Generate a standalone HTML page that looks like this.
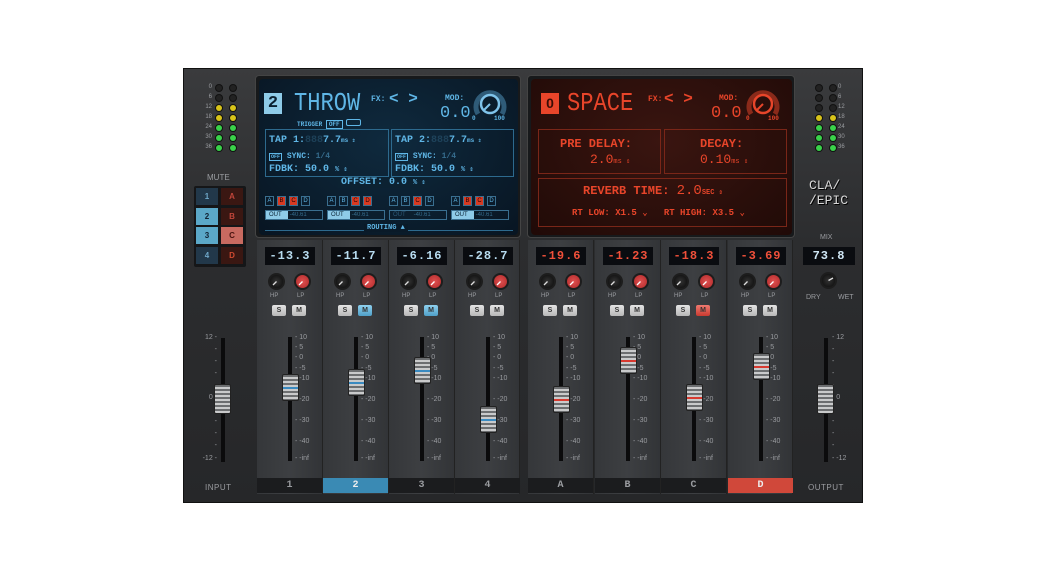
<!DOCTYPE html>
<html><head><meta charset="utf-8"><style>
*{margin:0;padding:0;box-sizing:border-box}
body{width:1042px;height:570px;background:#fff;position:relative;overflow:hidden;font-family:"Liberation Sans",sans-serif}
.a{position:absolute}
#plug{left:183px;top:68px;width:680px;height:435px;background:linear-gradient(#3a3b3d,#2c2d2f 40%,#262729);border:1px solid #111}
.lbl{color:#9a9ca0;font-size:7px}
.led{width:6px;height:6px;border-radius:50%}
.scr{border-radius:4px}
.bt{color:#5fb6e6;font-family:"Liberation Mono",monospace;font-weight:bold;white-space:nowrap}
.rt{color:#e8452a;font-family:"Liberation Mono",monospace;font-weight:bold;white-space:nowrap}
.ch{top:240px;height:254px;width:65px;background:linear-gradient(90deg,#35373a,#3d3f42 50%,#323437);border-right:1px solid #222}
.disp{background:#0a0c10;font-family:"Liberation Mono",monospace;font-weight:bold;font-size:12px;text-align:center;line-height:18px;letter-spacing:1px}
.knob{width:17px;height:17px;border-radius:50%;border:2px solid #1d1d1d}
.btn{width:14px;height:11px;background:linear-gradient(#e4e4e4,#b8b8b8);border-radius:2px;font-size:7px;font-weight:bold;color:#333;text-align:center;line-height:11px}
.track{width:4px;background:#0b0b0c}
.cap{width:17px;height:27px;background:repeating-linear-gradient(#6c6e70 0 2px,#c9cacb 2px 4px);border:1px solid #222;border-radius:2px}
.sc{font-size:7px;color:#9a9ca0}
.bar{height:15px;background:#1b1c1e;color:#9a9ca0;font-size:10px;text-align:center;line-height:15px;font-family:"Liberation Mono",monospace;font-weight:bold}
.bx{border:1px solid #2d6a8e}
.rbx{border:1px solid #7a2618}
</style></head><body>
<div id="plug" class="a"></div>
<div class="a scr" style="left:255px;top:75px;width:266px;height:163px;background:#17191b;border:1px solid #444"></div>
<div class="a scr" style="left:259px;top:79px;width:259px;height:156px;background:radial-gradient(ellipse at 50% 40%,#0f2a3e,#081522)"></div>
<div class="a" style="left:264px;top:93px;width:18px;height:21px;background:#8ecbe8;color:#0a2030;font-size:17px;font-weight:bold;text-align:center;line-height:21px;font-family:'Liberation Mono',monospace">2</div>
<div class="a bt" style="left:294px;top:88px;font-size:26px;font-weight:normal;transform:scaleX(.85);transform-origin:left">THROW</div>
<div class="a bt" style="left:371px;top:95px;font-size:8px">FX:</div>
<div class="a bt" style="left:389px;top:90px;font-size:16px">&lt; &gt;</div>
<div class="a bt" style="left:445px;top:94px;font-size:8px">MOD:</div>
<div class="a bt" style="left:440px;top:104px;font-size:17px;font-weight:normal">0.0</div>
<div class="a bt" style="left:472px;top:115px;font-size:6px">0</div><div class="a bt" style="left:494px;top:115px;font-size:6px">100</div>
<svg class="a" style="left:472px;top:87px" width="36" height="34"><path d="M6 27 A14 14 0 1 1 30 27" fill="none" stroke="#2f5b78" stroke-width="5"/><circle cx="18" cy="17" r="9" fill="none" stroke="#7fc3ea" stroke-width="2.5"/><line x1="18" y1="17" x2="12" y2="23" stroke="#7fc3ea" stroke-width="2"/></svg>
<div class="a bt" style="left:297px;top:119px;font-size:6px">TRIGGER <span style="border:1px solid #5fb6e6;padding:0 2px">OFF</span> <span style="display:inline-block;width:15px;height:7px;border:1px solid #5fb6e6;border-radius:2px"></span></div>
<div class="a bx" style="left:265px;top:129px;width:124px;height:48px"></div>
<div class="a bx" style="left:391px;top:129px;width:123px;height:48px"></div>
<div class="a bt" style="left:269px;top:135px;font-size:10px">TAP 1:<span style="opacity:.2">888</span>7.7<span style="font-size:6px">ms ⇕</span></div>
<div class="a bt" style="left:395px;top:135px;font-size:10px">TAP 2:<span style="opacity:.2">888</span>7.7<span style="font-size:6px">ms ⇕</span></div>
<div class="a bt" style="left:269px;top:152px;font-size:8px"><span style="border:1px solid #5fb6e6;font-size:5px;padding:0 1px">OFF</span> SYNC: <span style="opacity:.5">1/4</span></div>
<div class="a bt" style="left:395px;top:152px;font-size:8px"><span style="border:1px solid #5fb6e6;font-size:5px;padding:0 1px">OFF</span> SYNC: <span style="opacity:.5">1/4</span></div>
<div class="a bt" style="left:269px;top:164px;font-size:10px">FDBK: 50.0 <span style="font-size:7px">% ⇕</span></div>
<div class="a bt" style="left:395px;top:164px;font-size:10px">FDBK: 50.0 <span style="font-size:7px">% ⇕</span></div>
<div class="a bt" style="left:338px;top:177px;font-size:10px;background:#0c2232;padding:0 3px">OFFSET: 0.0 <span style="font-size:7px">% ⇕</span></div>
<div id="route"></div>
<div class="a" style="left:265px;top:230px;width:248px;height:1px;background:#2d6a8e"></div>
<div class="a bt" style="left:364px;top:224px;font-size:7px;background:#0a1a28;padding:0 3px">ROUTING ▲</div>
<div class="a scr" style="left:527px;top:75px;width:268px;height:163px;background:#17191b;border:1px solid #444"></div>
<div class="a scr" style="left:531px;top:79px;width:261px;height:156px;background:radial-gradient(ellipse at 50% 40%,#3a1510,#200a07)"></div>
<div class="a" style="left:541px;top:93px;width:18px;height:21px;background:#e8452a;color:#3a0c05;font-size:14px;font-weight:bold;text-align:center;line-height:21px">0</div>
<div class="a rt" style="left:567px;top:88px;font-size:26px;font-weight:normal;transform:scaleX(.85);transform-origin:left">SPACE</div>
<div class="a rt" style="left:648px;top:95px;font-size:8px">FX:</div>
<div class="a rt" style="left:664px;top:90px;font-size:16px">&lt; &gt;</div>
<div class="a rt" style="left:719px;top:94px;font-size:8px">MOD:</div>
<div class="a rt" style="left:711px;top:104px;font-size:17px;font-weight:normal">0.0</div>
<div class="a rt" style="left:746px;top:115px;font-size:6px">0</div><div class="a rt" style="left:768px;top:115px;font-size:6px">100</div>
<svg class="a" style="left:745px;top:87px" width="36" height="34"><path d="M6 27 A14 14 0 1 1 30 27" fill="none" stroke="#8a2a1a" stroke-width="5"/><circle cx="18" cy="17" r="9" fill="none" stroke="#e8452a" stroke-width="2.5"/><line x1="18" y1="17" x2="12" y2="23" stroke="#e8452a" stroke-width="2"/></svg>
<div class="a rbx" style="left:538px;top:129px;width:123px;height:45px"></div>
<div class="a rbx" style="left:664px;top:129px;width:123px;height:45px"></div>
<div class="a rbx" style="left:538px;top:178px;width:249px;height:49px"></div>
<div class="a rt" style="left:560px;top:137px;font-size:12px">PRE DELAY:</div>
<div class="a rt" style="left:590px;top:152px;font-size:13px;font-weight:normal">2.0<span style="font-size:7px">ms ⇕</span></div>
<div class="a rt" style="left:700px;top:137px;font-size:12px">DECAY:</div>
<div class="a rt" style="left:700px;top:152px;font-size:13px;font-weight:normal">0.10<span style="font-size:7px">ms ⇕</span></div>
<div class="a rt" style="left:583px;top:183px;font-size:12px">REVERB TIME: <span style="font-weight:normal;font-size:14px">2.0</span><span style="font-size:7px">SEC ⇕</span></div>
<div class="a rt" style="left:572px;top:208px;font-size:9px">RT LOW: X1.5 ⌄ &nbsp; RT HIGH: X3.5 ⌄</div>
<div class="a" style="left:809px;top:178px;color:#d8d8d8;font-family:'Liberation Mono',monospace;font-size:13px;line-height:15px;text-shadow:1px 1px 0 #000">CLA/<br>/EPIC</div>
<div id="gen"></div>
<script>
let h='';
const A=(s)=>h+=s;
const rows=['0','6','12','18','24','30','36'];
rows.forEach((r,i)=>{const y=84+i*10;const c=i<2?'#222':i<4?'#d8c41a':'#3ad24a';
A(`<div class="a lbl" style="left:200px;top:${y}px;width:12px;text-align:right;font-size:6px">${r}</div>`);
[216,230].forEach(x=>A(`<div class="a led" style="left:${x}px;top:${y+1}px;background:${c};box-shadow:0 0 0 1px #111"></div>`));
const c2=i<3?'#222':i<4?'#d8c41a':'#3ad24a';
A(`<div class="a lbl" style="left:838px;top:${y}px;font-size:6px">${r}</div>`);
[818,832].forEach(x=>A(`<div class="a led" style="left:${x-2}px;top:${y+1}px;background:${c2};box-shadow:0 0 0 1px #111"></div>`));
});
A(`<div class="a lbl" style="left:207px;top:173px;font-size:8px">MUTE</div>`);
A(`<div class="a" style="left:194px;top:186px;width:52px;height:81px;background:#151618;border-radius:2px"></div>`);
const mb=[['1','#22384a','#6fa7c8'],['A','#3a1712','#c0453a'],['2','#5ba8c8','#123'],['B','#3a1712','#c0453a'],['3','#5ba8c8','#123'],['C','#c86a60','#4a1410'],['4','#22384a','#6fa7c8'],['D','#3a1712','#d04a30']];
mb.forEach((m,i)=>{const x=196+(i%2)*25,y=188+Math.floor(i/2)*19.5;A(`<div class="a" style="left:${x}px;top:${y}px;width:22px;height:17px;background:${m[1]};color:${m[2]};font-size:8px;text-align:center;line-height:17px;font-weight:bold">${m[0]}</div>`)});
[[265,'B,C'],[327,'C,D'],[389,'C'],[451,'B,C']].forEach(([x,on],j)=>{
['A','B','C','D'].forEach((l,k)=>{const o=on.includes(l);A(`<div class="a" style="left:${x+k*12}px;top:196px;width:9px;height:10px;border:1px solid #3a6f90;background:${o?'#d83a22':'transparent'};color:${o?'#200':'#5fb6e6'};font-size:6px;text-align:center;line-height:8px">${l}</div>`)});
A(`<div class="a" style="left:${x}px;top:210px;width:58px;height:10px;border:1px solid #3a6f90;font-size:6px;line-height:8px;color:#5fb6e6;white-space:nowrap"><span style="background:${j==2?'transparent':'#8ecbe8'};color:${j==2?'#2d5a78':'#0a2030'};padding:0 3px;display:inline-block;width:22px">OUT</span> <span style="opacity:.5">-40.61</span></div>`);
});
const chs=[[257,'-13.3','1',388,0],[323,'-11.7','2',383,1],[389,'-6.16','3',371,1],[455,'-28.7','4',420,0],[528,'-19.6','A',400,0],[595,'-1.23','B',361,0],[661,'-18.3','C',398,2],[728,'-3.69','D',367,0]];
const sv=[['10',338],['5',348],['0',358],['-5',369],['-10',379],['-20',400],['-30',421],['-40',442],['-inf',459]];
chs.forEach(([x,v,n,cy,st],i)=>{const red=i>=4;
A(`<div class="a ch" style="left:${x}px;width:${i==3||i==7?65:66}px"></div>`);
A(`<div class="a disp" style="left:${x+8}px;top:247px;width:50px;height:18px;color:${red?'#f0503a':'#b8dcf0'}">${v}</div>`);
A(`<div class="a knob" style="left:${x+11}px;top:273px;background:radial-gradient(#333,#0a0a0a)"></div>`);
A(`<div class="a knob" style="left:${x+37}px;top:273px;background:radial-gradient(#e05050,#b02a2a)"></div>`);
A(`<svg class="a" style="left:${x+11}px;top:273px" width="44" height="17"><line x1="8.5" y1="8.5" x2="5" y2="12" stroke="#ddd" stroke-width="1.3"/><line x1="34.5" y1="8.5" x2="31" y2="12" stroke="#fff" stroke-width="1.3"/></svg>`);
A(`<div class="a sc" style="left:${x+13}px;top:293px;font-size:6px">HP</div><div class="a sc" style="left:${x+40}px;top:293px;font-size:6px">LP</div>`);
A(`<div class="a btn" style="left:${x+15}px;top:305px">S</div>`);
let mc=(st==1)?'linear-gradient(#8fd0ee,#4fa0c8)':(st==2)?'linear-gradient(#f07a70,#c83a30)':'linear-gradient(#e4e4e4,#b8b8b8)';
A(`<div class="a btn" style="left:${x+35}px;top:305px;background:${mc}">M</div>`);
A(`<div class="a track" style="left:${x+31}px;top:337px;height:124px"></div>`);
sv.forEach(([t,y])=>A(`<div class="a sc" style="left:${x+38}px;top:${y-4}px">- ${t}</div>`));
A(`<div class="a cap" style="left:${x+25}px;top:${cy-14}px"></div>`);
A(`<div class="a" style="left:${x+26}px;top:${cy-1}px;width:15px;height:2px;background:${red?'#d83a30':'#3a8ac0'}"></div>`);
const sel=n=='2'?'#3a8ab4':n=='D'?'#d0483a':'#1b1c1e';
A(`<div class="a bar" style="left:${x}px;top:478px;width:65px;background:${sel};color:${(n=='2'||n=='D')?'#eee':'#9a9ca0'}">${n}</div>`);
});
[[221,'INPUT',399,205],[824,'OUTPUT',399,808]].forEach(([x,l,cy,lx])=>{
A(`<div class="a track" style="left:${x}px;top:338px;height:124px"></div>`);
[['12',338],['',350],['',362],['',374],['',386],['0',398],['',410],['',422],['',434],['',446],['-12',459]].forEach(([t,y])=>{
if(l=='INPUT')A(`<div class="a sc" style="left:${x-20}px;top:${y-4}px;width:16px;text-align:right">${t} -</div>`);
else A(`<div class="a sc" style="left:${x+8}px;top:${y-4}px">- ${t}</div>`);});
A(`<div class="a cap" style="left:${x-7}px;top:${cy-15}px;height:30px"></div>`);
A(`<div class="a lbl" style="left:${lx}px;top:483px;font-size:8px;letter-spacing:.5px">${l}</div>`);
});
A(`<div class="a lbl" style="left:820px;top:234px;font-size:7px">MIX</div>`);
A(`<div class="a disp" style="left:803px;top:247px;width:52px;height:18px;color:#cfe6f4">73.8</div>`);
A(`<div class="a knob" style="left:820px;top:272px;background:radial-gradient(#333,#0a0a0a)"></div>`);
A(`<svg class="a" style="left:820px;top:272px" width="17" height="17"><line x1="8.5" y1="8.5" x2="13" y2="6" stroke="#ddd" stroke-width="1.3"/></svg>`);
A(`<div class="a sc" style="left:806px;top:294px">DRY</div><div class="a sc" style="left:838px;top:294px">WET</div>`);
document.getElementById('gen').innerHTML=h;
</script>
</body></html>
